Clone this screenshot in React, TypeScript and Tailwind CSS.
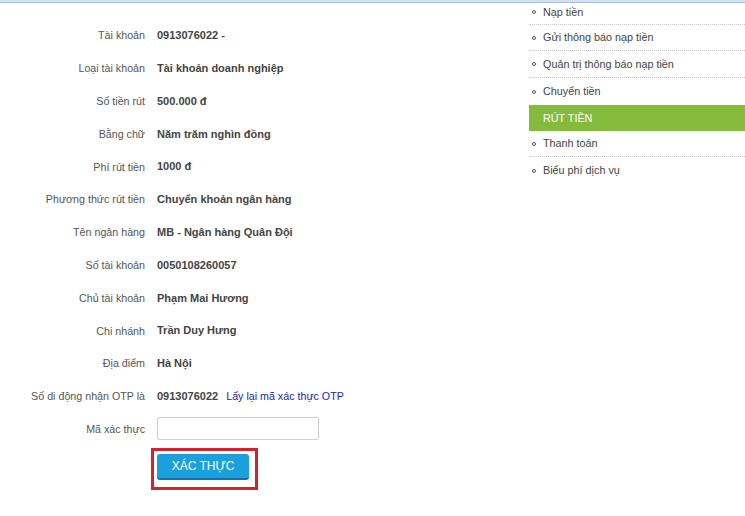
const rows: [string, string][] = [
  ["Tài khoản", "0913076022 -"],
  ["Loại tài khoản", "Tài khoản doanh nghiệp"],
  ["Số tiền rút", "500.000 đ"],
  ["Bằng chữ", "Năm trăm nghìn đồng"],
  ["Phí rút tiền", "1000 đ"],
  ["Phương thức rút tiền", "Chuyển khoản ngân hàng"],
  ["Tên ngân hàng", "MB - Ngân hàng Quân Đội"],
  ["Số tài khoản", "0050108260057"],
  ["Chủ tài khoản", "Phạm Mai Hương"],
  ["Chi nhánh", "Trần Duy Hưng"],
  ["Địa điểm", "Hà Nội"],
]

const menu = [
  { label: "Nạp tiền", h: "h-[22px]", line: true },
  { label: "Gửi thông báo nạp tiền", h: "h-[26px]", line: true },
  { label: "Quản trị thông báo nạp tiền", h: "h-[27px]", line: true },
  { label: "Chuyển tiền", h: "h-[27px]", line: false },
  { label: "RÚT TIỀN", h: "h-[26px]", line: false, active: true },
  { label: "Thanh toán", h: "h-[26px]", line: true },
  { label: "Biểu phí dịch vụ", h: "h-[27px]", line: false },
]

function Row({ label, children }: { label: string; children: React.ReactNode }) {
  return (
    <div className="flex h-[32.8px] items-center">
      <div className="w-[145px] shrink-0 text-right text-[10.7px] text-[#555]">{label}</div>
      <div className="ml-[12px] flex items-center">{children}</div>
    </div>
  )
}

export default function App() {
  return (
    <div className="h-[516px] w-[745px] overflow-hidden bg-white text-[11px] font-['Liberation_Sans',Arial,sans-serif]">
      {/* top strip */}
      <div className="h-[3px] border-b border-[#a9bfdc] bg-[#d3e1f2]" />

      <div className="flex">
        {/* form */}
        <div className="flex-1 pt-[16px]">
          {rows.map(([l, v]) => (
            <Row key={l} label={l}>
              <span className="font-bold text-[#444]">{v}</span>
            </Row>
          ))}
          <Row label="Số di động nhận OTP là">
            <span className="font-bold text-[#444]">0913076022</span>
            <a href="#" className="ml-[8px] text-[10.7px] text-[#1c1ca8]">
              Lấy lại mã xác thực OTP
            </a>
          </Row>
          <Row label="Mã xác thực">
            <input className="h-[23px] w-[162px] rounded-[2px] border border-[#cfcfcf] bg-white px-1 outline-none" />
          </Row>
          <div className="ml-[151px] mt-[3px] h-[42px] w-[107px] border-[3px] border-[#d3222a] p-[3px]">
            <button className="h-[26px] w-[92px] rounded-[3px] border-b-2 border-[#0f72ae] bg-[#1ba0dc] text-[12px] uppercase text-white">
              Xác thực
            </button>
          </div>
        </div>

        {/* sidebar */}
        <ul className="w-[216px] shrink-0 text-[10.8px] text-[#444]">
          {menu.map((m) =>
            m.active ? (
              <li key={m.label} className={`${m.h} flex items-center bg-[#85bb3c] pl-[14px] text-white`}>
                {m.label}
              </li>
            ) : (
              <li
                key={m.label}
                className={`${m.h} flex items-center ${m.line ? "border-b border-dotted border-[#c8c8c8]" : ""} ${
                  m.label === "Nạp tiền" ? "pb-[3px]" : ""
                }`}
              >
                <span className="ml-[3px] mr-[7px] h-[4px] w-[4px] rounded-full border border-[#555]" />
                {m.label}
              </li>
            )
          )}
        </ul>
      </div>
    </div>
  )
}
